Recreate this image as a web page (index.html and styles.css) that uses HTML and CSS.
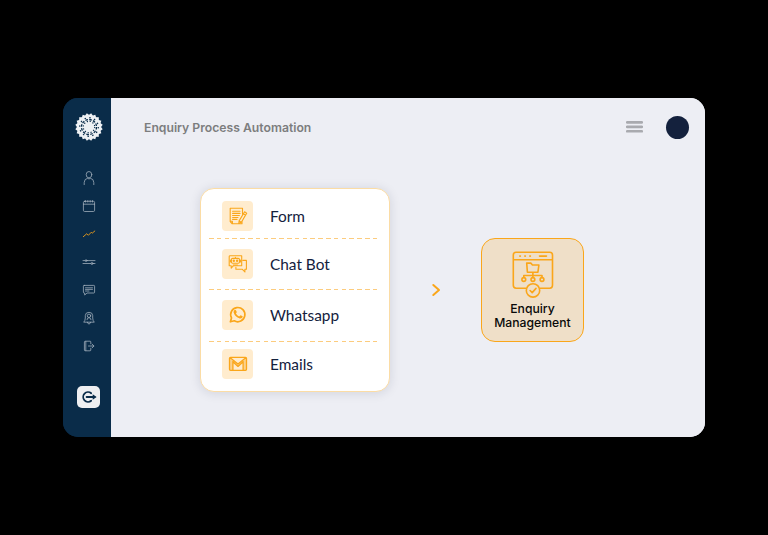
FILE: index.html
```html
<!DOCTYPE html>
<html lang="en">
<head>
<meta charset="utf-8">
<title>Enquiry Process Automation</title>
<link rel="stylesheet" href="styles.css">
</head>
<body>
<div class="window">
  <nav class="sidebar">
    <svg class="logo" viewBox="-14 -14 28 28">
      <defs><rect id="tooth" x="-9.8" y="-9.8" width="19.6" height="19.6"/></defs>
      <g fill="#eef1f4">
        <use href="#tooth"/>
        <use href="#tooth" transform="rotate(18)"/>
        <use href="#tooth" transform="rotate(36)"/>
        <use href="#tooth" transform="rotate(54)"/>
        <use href="#tooth" transform="rotate(72)"/>
      </g>
      <g class="petals">
        <circle r="9.3" stroke-width="1.2" stroke-dasharray="1.5 3.37"/>
        <circle r="7.5" stroke-width="1.3" stroke-dasharray="2.6 1.327"/>
        <circle r="5.7" stroke-width="1.1" stroke-dasharray="1.2 1.784"/>
      </g>
    </svg>
    <div class="menu">
      <svg viewBox="0 0 14 14"><ellipse cx="7" cy="3.7" rx="2.8" ry="3.2"/><path d="M2.2 13.6V11.5Q2.4 7.7 5.5 7.4Q7 8.4 8.5 7.4Q11.6 7.7 11.8 11.5V13.6"/></svg>
      <svg viewBox="0 0 14 14"><rect x="1.4" y="2.3" width="11.2" height="10.2" rx="1.2"/><path d="M1.4 5.2H12.6M3.5 1.6v1.4M5.8 1.6v1.4M8.2 1.6v1.4M10.5 1.6v1.4"/></svg>
      <svg class="active" viewBox="0 0 14 14"><path d="M1.3 9.7L4.8 6.7L6.4 8.3L9.3 5.2L10.2 6.2L12.8 4"/></svg>
      <svg viewBox="0 0 14 14"><path d="M1 5.6H3.2M5 5.6H13M1 8.5H9M11 8.5H13"/><circle cx="4.1" cy="5.6" r=".9"/><circle cx="10" cy="8.5" r="1"/></svg>
      <svg viewBox="0 0 14 14"><path d="M2.2 2.4H11.8Q12.6 2.4 12.6 3.2V9.2Q12.6 10 11.8 10H5L2.7 12V10H2.2Q1.4 10 1.4 9.2V3.2Q1.4 2.4 2.2 2.4ZM3.5 4.8H10.5M3.5 6.4H10.5M3.5 8H7"/></svg>
      <svg viewBox="0 0 14 14"><path d="M2 10.9Q3.3 9.6 3.3 7V4.5Q3.5 1.3 7 1.3T10.7 4.5V7Q10.7 9.6 12 10.9ZM5.4 11.2Q5.7 13 7 13T8.6 11.2"/><circle cx="7" cy="4.8" r="1.7"/><path d="M5 8.7Q5 6.7 7 6.7T9 8.7"/></svg>
      <svg viewBox="0 0 14 14"><path d="M8.8 4.8V2.9Q8.8 2.2 8 2.2H3.3Q2.4 2.2 2.4 3V11Q2.4 11.8 3.3 11.8H8Q8.8 11.8 8.8 11V9.2M3.8 2.4V11.6M6.5 7H11.8M10.2 5.2L11.9 7L10.2 8.8"/></svg>
    </div>
    <div class="signout">
      <svg viewBox="0 0 16 16"><path d="M10.2 4.2A4.9 4.9 0 1 0 10.2 11.8M5.6 8H13.5"/><path class="head" d="M11.7 5.2L15.6 8L11.7 10.8Z"/></svg>
    </div>
  </nav>
  <main class="main">
    <header class="topbar">
      <h1>Enquiry Process Automation</h1>
      <svg class="burger" viewBox="0 0 17 12"><path d="M1.2 1.4H15.8M1.2 5.9H15.8M1.2 10.3H15.8"/></svg>
      <div class="avatar"></div>
    </header>
    <section class="flow">
      <ul class="sources">
        <li class="form">
          <span class="tile"><svg viewBox="0 0 20 20"><path d="M14.5 8.3V2.2H2.2V15.6L4.2 17.8H14V15.7M2.2 15.2H4.4V17.5"/><path d="M4.6 5.2H12M4.6 7.4H12M4.6 9.5H11.4M4.6 11.5H10M4.6 13.4H9"/><path d="M16.6 5.8L18.7 7.1L13.4 16.2L10.8 17.5L11.1 14.9ZM11.1 14.9L13.4 16.2M15.4 7.8L17.5 9.1"/></svg></span>Form</li>
        <li class="chat">
          <span class="tile"><svg viewBox="0 0 20 20"><path d="M1.7 1.8H13.7V11.8H5.3L3.2 14.1V11.8H1.2V2.6Q1.2 1.8 2 1.8"/><rect x="3.4" y="4.4" width="8.1" height="4.8" rx="1.2"/><path d="M2.4 6V8M12.6 6V8M7.4 3.2V4.3M5.2 11H9.6"/><circle class="solid" cx="5.8" cy="6.8" r="1.2"/><circle class="solid" cx="9.1" cy="6.8" r="1.2"/><path d="M14.8 6.4H18.4V15.3H16.9V18L14.4 15.3H7.9V13.2"/></svg></span>Chat Bot</li>
        <li class="whatsapp">
          <span class="tile"><svg viewBox="0 0 20 20"><path class="bold" d="M2.4 16.8L3.5 12.9A7.1 7.1 0 1 1 6.3 15.8Z"/><path class="solid" d="M6.5 5Q7.2 4.5 7.9 5.2L8.8 7.1Q8.9 7.6 7.9 8.4Q9.1 10.6 11.1 11.4L12.2 10.4Q12.6 10.1 13.1 10.4L14.6 11.2Q14.9 11.6 14.4 12.4Q13.4 13.8 11.7 13.4Q7.1 12.2 5.6 7.6Q5.3 6 6.5 5Z"/></svg></span>Whatsapp</li>
        <li class="mail">
          <span class="tile"><svg viewBox="0 0 20 20"><path class="tint" d="M1.6 4V16H5V8L10 12L15 8V16H18.4V4L10 9.8Z"/><path class="mid" d="M1.5 4.3Q1.5 3.4 2.5 3.4H17.5Q18.5 3.4 18.5 4.3V15.3Q18.5 16.3 17.5 16.3H2.5Q1.5 16.3 1.5 15.3ZM2.2 3.8L10 10L17.8 3.8M4.9 7.7L10 12.4L15.1 7.7M4.9 7.7V16M15.1 7.7V16"/></svg></span>Emails</li>
      </ul>
      <svg class="arrow" viewBox="0 0 10 14"><path d="M2.3 2L8 7L2.3 12"/></svg>
      <div class="target">
        <svg viewBox="0 0 42 47"><path d="M13.8 37.2H4.2Q1.3 37.2 1.3 34.3V4Q1.3 1.3 4 1.3H37.8Q40.5 1.3 40.5 4V34.3Q40.5 37.2 37.8 37.2H28.2M1.3 8.8H40.5M27.5 5.1H34.5"/><path d="M7.8 5.1h.6M12.8 5.1h.6M17.8 5.1h.6"/><path d="M14.7 12.1H18.8L20.5 14H26.9L25.9 21.2H15.4ZM20.9 21.2V26.5M11.8 26.5V24.5H30V26.5"/><circle cx="11.8" cy="28.5" r="1.9"/><circle cx="20.9" cy="28.5" r="1.9"/><circle cx="30" cy="28.5" r="1.9"/><circle cx="21" cy="39.4" r="6.7"/><path d="M18.1 39.5L20.2 41.6L24 37.4"/></svg>
        <p>Enquiry<br>Management</p>
      </div>
    </section>
  </main>
</div>
</body>
</html>
```

FILE: styles.css
```css
* { box-sizing: border-box; }
body { margin: 0; background: #000; font-family: Inter, "Liberation Sans", sans-serif; }
svg { display: block; fill: none; stroke-linecap: round; stroke-linejoin: round; }

.window {
  display: grid;
  grid-template-columns: 48px 1fr;
  width: 642px;
  height: 339px;
  margin: 98px 0 0 63px;
  border-radius: 15px;
  overflow: hidden;
  background: linear-gradient(90deg, #0a2c49 40px, #edeef4 60px);
}

.sidebar { display: flex; flex-direction: column; align-items: center; padding: 15px 0 0 3px; background: #0a2c49; }
.logo { width: 28px; height: 28px; }
.petals { fill: none; stroke: #0a2c49; stroke-linecap: butt; }
.menu { display: flex; flex-direction: column; gap: 14px; margin-top: 30px; }
.menu svg { width: 14px; height: 14px; stroke: #a9b6c2; stroke-width: .75; }
.menu .active { stroke: #d79320; stroke-width: 1; }
.signout { display: grid; place-items: center; width: 23px; height: 22px; margin-top: 33px; border-radius: 5px; background: #eeeff1; }
.signout svg { width: 16px; height: 16px; stroke: #0a2c49; stroke-width: 1.8; }
.signout .head { fill: #0a2c49; stroke: none; }

.main { background: #edeef4; }
.topbar { display: flex; align-items: center; height: 58px; padding: 0 16.5px 0 33px; }
h1 { flex: 1; margin: 0; padding-top: 1px; font-size: 12.2px; font-weight: 600; line-height: 16px; color: #7c7d7e; }
.burger { width: 17px; height: 12px; margin-right: 22.5px; stroke: #a9aaaf; stroke-width: 2.6; }
.avatar { width: 23px; height: 23px; border-radius: 50%; background: #14213d; }

.flow { display: flex; align-items: flex-start; padding: 32px 0 0 89px; }
.sources {
  width: 190px;
  height: 204px;
  margin: 0;
  padding: 0 8px;
  list-style: none;
  border: 1px solid #fbdca5;
  border-radius: 14px;
  background: #fff;
  box-shadow: 0 1px 11px rgba(20, 33, 61, .13);
  font: 15.4px Lato, sans-serif;
  color: #14213d;
}
.sources li {
  display: flex;
  align-items: flex-start;
  gap: 17px;
  padding-left: 13px;
  line-height: 30px;
  background: repeating-linear-gradient(90deg, #fccc7e 0 4.6px, transparent 4.6px 7.8px) 0 100% / 100% 1px no-repeat;
}
.form { height: 50px; padding-top: 12px; }
.chat { height: 51px; padding-top: 10px; }
.whatsapp { height: 52px; padding-top: 10px; }
.sources .mail { padding-top: 7px; background: none; }
.tile { display: grid; place-items: center; width: 31px; height: 30px; border-radius: 4px; background: #ffecce; }
.tile svg { width: 20px; height: 20px; stroke: #faa61a; stroke-width: 1.1; }
.tile .bold { stroke-width: 1.7; }
.tile .mid { stroke-width: 1.3; }
.tile .solid { fill: #faa61a; stroke: none; }
.tile .tint { fill: #fcd18a; stroke: none; }

.arrow { width: 10px; height: 14px; margin: 94.5px 0 0 41px; stroke: #faa61a; stroke-width: 2; }
.target {
  display: flex;
  flex-direction: column;
  align-items: center;
  width: 103px;
  height: 104px;
  margin: 50px 0 0 40px;
  padding-top: 12px;
  border: 1.3px solid #faa61a;
  border-radius: 14px;
  background: #efdfc8;
}
.target svg { width: 42px; height: 47px; stroke: #faa61a; stroke-width: 1.6; }
.target p { margin: 4px 0 0; font-size: 12.2px; font-weight: 500; line-height: 14px; text-align: center; color: #090909; }
```
